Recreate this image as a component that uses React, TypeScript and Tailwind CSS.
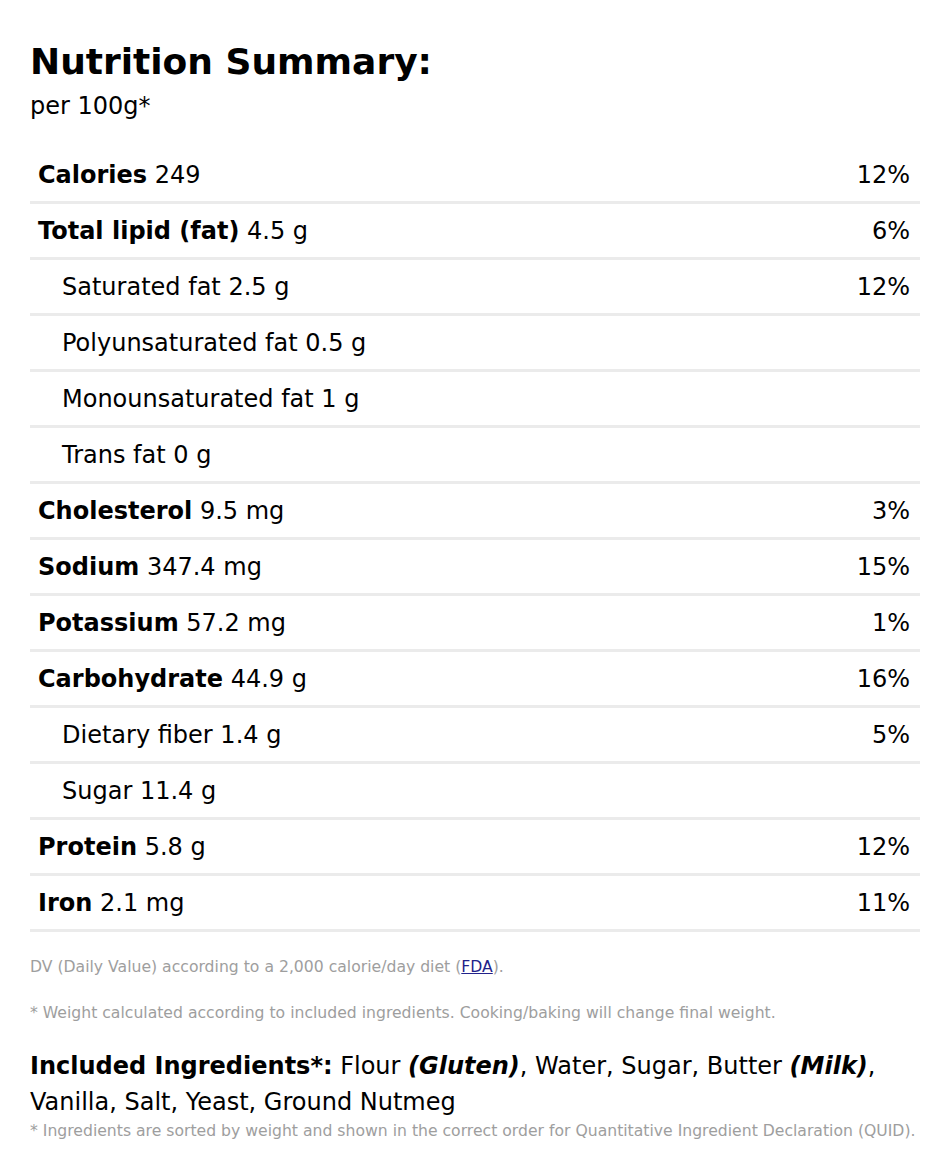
type Row = {
  label: string;
  value: string;
  dv?: string;
  sub?: boolean;
};

const rows: Row[] = [
  { label: "Calories", value: "249", dv: "12%" },
  { label: "Total lipid (fat)", value: "4.5 g", dv: "6%" },
  { label: "Saturated fat", value: "2.5 g", dv: "12%", sub: true },
  { label: "Polyunsaturated fat", value: "0.5 g", sub: true },
  { label: "Monounsaturated fat", value: "1 g", sub: true },
  { label: "Trans fat", value: "0 g", sub: true },
  { label: "Cholesterol", value: "9.5 mg", dv: "3%" },
  { label: "Sodium", value: "347.4 mg", dv: "15%" },
  { label: "Potassium", value: "57.2 mg", dv: "1%" },
  { label: "Carbohydrate", value: "44.9 g", dv: "16%" },
  { label: "Dietary fiber", value: "1.4 g", dv: "5%", sub: true },
  { label: "Sugar", value: "11.4 g", sub: true },
  { label: "Protein", value: "5.8 g", dv: "12%" },
  { label: "Iron", value: "2.1 mg", dv: "11%" },
];

function NutrientRow({ label, value, dv, sub }: Row) {
  return (
    <div className="flex h-[53px] items-center justify-between border-b-[3px] border-[#ebebeb] pr-[10px] box-content">
      <div className={sub ? "pl-[32px]" : "pl-[8px]"}>
        {sub ? <span>{label}</span> : <span className="font-bold">{label}</span>} {value}
      </div>
      {dv && <div>{dv}</div>}
    </div>
  );
}

export default function App() {
  return (
    <div className="min-h-screen bg-white px-[30px] pt-[38px] text-black text-[24px] leading-[36px] [font-family:'DejaVu_Sans',sans-serif]">
      {/* header */}
      <h2 className="text-[36px] leading-[48px] font-bold">Nutrition Summary:</h2>
      <div className="mt-[2px]">per 100g*</div>

      {/* table */}
      <div className="mt-[24px] w-[890px]">
        {rows.map((r) => (
          <NutrientRow key={r.label} {...r} />
        ))}
      </div>

      {/* notes */}
      <p className="mt-[23px] text-[15.65px] leading-[24px] text-[#9e9e9e]">
        DV (Daily Value) according to a 2,000 calorie/day diet (
        <a href="#" className="text-[#22228a] underline">FDA</a>).
      </p>
      <p className="mt-[22px] text-[15.65px] leading-[24px] text-[#9e9e9e]">
        * Weight calculated according to included ingredients. Cooking/baking will change final weight.
      </p>

      {/* ingredients */}
      <p className="mt-[23px] w-[890px]">
        <span className="font-bold">Included Ingredients*:</span> Flour{" "}
        <span className="font-bold italic">(Gluten)</span>, Water, Sugar, Butter{" "}
        <span className="font-bold italic">(Milk)</span>, Vanilla, Salt, Yeast, Ground Nutmeg
      </p>
      <p className="-mt-[1px] whitespace-nowrap text-[15.65px] leading-[24px] text-[#9e9e9e]">
        * Ingredients are sorted by weight and shown in the correct order for Quantitative Ingredient Declaration (QUID).
      </p>
    </div>
  );
}
